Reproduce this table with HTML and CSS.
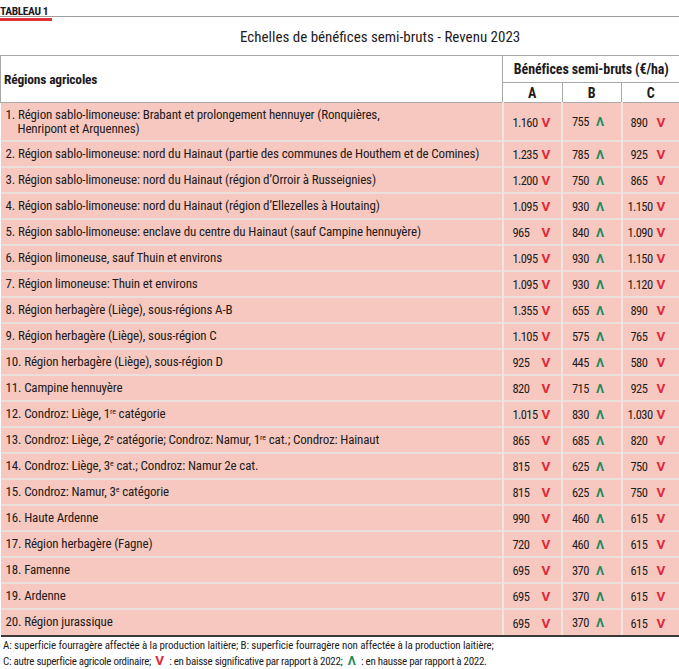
FILE: index.html
```html
<!DOCTYPE html>
<html lang="fr">
<head>
<meta charset="utf-8">
<link rel="stylesheet" href="styles.css">
</head>
<body>
<div class="page">
  <div class="kicker"><span class="kicker-label">TABLEAU 1</span></div>
  <h1 class="title">Echelles de bénéfices semi-bruts - Revenu 2023</h1>
  <table class="grid">
    <colgroup>
      <col class="c-region"><col class="c-a"><col class="c-b"><col class="c-c">
    </colgroup>
    <thead>
      <tr>
        <th class="th-region" rowspan="2">Régions agricoles</th>
        <th class="th-group" colspan="3">Bénéfices semi-bruts (€/ha)</th>
      </tr>
      <tr>
        <th class="th-sub">A</th><th class="th-sub">B</th><th class="th-sub last">C</th>
      </tr>
    </thead>
    <tbody>
      <tr class="tall"><td class="reg">1. Région sablo-limoneuse: Brabant et prolongement hennuyer (Ronquières,<br><span class="indent">Henripont et Arquennes)</span></td><td class="a"><b class="n">1.160</b><i class="dn">V</i></td><td class="b"><b class="n">755</b><i class="up">Λ</i></td><td class="c"><b class="n">890</b><i class="dn">V</i></td></tr>
      <tr><td class="reg">2. Région sablo-limoneuse: nord du Hainaut (partie des communes de Houthem et de Comines)</td><td class="a"><b class="n">1.235</b><i class="dn">V</i></td><td class="b"><b class="n">785</b><i class="up">Λ</i></td><td class="c"><b class="n">925</b><i class="dn">V</i></td></tr>
      <tr><td class="reg">3. Région sablo-limoneuse: nord du Hainaut (région d’Orroir à Russeignies)</td><td class="a"><b class="n">1.200</b><i class="dn">V</i></td><td class="b"><b class="n">750</b><i class="up">Λ</i></td><td class="c"><b class="n">865</b><i class="dn">V</i></td></tr>
      <tr><td class="reg">4. Région sablo-limoneuse: nord du Hainaut (région d’Ellezelles à Houtaing)</td><td class="a"><b class="n">1.095</b><i class="dn">V</i></td><td class="b"><b class="n">930</b><i class="up">Λ</i></td><td class="c"><b class="n w4">1.150</b><i class="dn">V</i></td></tr>
      <tr><td class="reg">5. Région sablo-limoneuse: enclave du centre du Hainaut (sauf Campine hennuyère)</td><td class="a"><b class="n">965</b><i class="dn">V</i></td><td class="b"><b class="n">840</b><i class="up">Λ</i></td><td class="c"><b class="n w4">1.090</b><i class="dn">V</i></td></tr>
      <tr><td class="reg">6. Région limoneuse, sauf Thuin et environs</td><td class="a"><b class="n">1.095</b><i class="dn">V</i></td><td class="b"><b class="n">930</b><i class="up">Λ</i></td><td class="c"><b class="n w4">1.150</b><i class="dn">V</i></td></tr>
      <tr><td class="reg">7. Région limoneuse: Thuin et environs</td><td class="a"><b class="n">1.095</b><i class="dn">V</i></td><td class="b"><b class="n">930</b><i class="up">Λ</i></td><td class="c"><b class="n w4">1.120</b><i class="dn">V</i></td></tr>
      <tr><td class="reg">8. Région herbagère (Liège), sous-régions A-B</td><td class="a"><b class="n">1.355</b><i class="dn">V</i></td><td class="b"><b class="n">655</b><i class="up">Λ</i></td><td class="c"><b class="n">890</b><i class="dn">V</i></td></tr>
      <tr><td class="reg">9. Région herbagère (Liège), sous-région C</td><td class="a"><b class="n">1.105</b><i class="dn">V</i></td><td class="b"><b class="n">575</b><i class="up">Λ</i></td><td class="c"><b class="n">765</b><i class="dn">V</i></td></tr>
      <tr><td class="reg">10. Région herbagère (Liège), sous-région D</td><td class="a"><b class="n">925</b><i class="dn">V</i></td><td class="b"><b class="n">445</b><i class="up">Λ</i></td><td class="c"><b class="n">580</b><i class="dn">V</i></td></tr>
      <tr><td class="reg">11. Campine hennuyère</td><td class="a"><b class="n">820</b><i class="dn">V</i></td><td class="b"><b class="n">715</b><i class="up">Λ</i></td><td class="c"><b class="n">925</b><i class="dn">V</i></td></tr>
      <tr><td class="reg">12. Condroz: Liège, 1<sup>re</sup> catégorie</td><td class="a"><b class="n">1.015</b><i class="dn">V</i></td><td class="b"><b class="n">830</b><i class="up">Λ</i></td><td class="c"><b class="n w4">1.030</b><i class="dn">V</i></td></tr>
      <tr><td class="reg">13. Condroz: Liège, 2<sup>e</sup> catégorie; Condroz: Namur, 1<sup>re</sup> cat.; Condroz: Hainaut</td><td class="a"><b class="n">865</b><i class="dn">V</i></td><td class="b"><b class="n">685</b><i class="up">Λ</i></td><td class="c"><b class="n">820</b><i class="dn">V</i></td></tr>
      <tr><td class="reg">14. Condroz: Liège, 3<sup>e</sup> cat.; Condroz: Namur 2e cat.</td><td class="a"><b class="n">815</b><i class="dn">V</i></td><td class="b"><b class="n">625</b><i class="up">Λ</i></td><td class="c"><b class="n">750</b><i class="dn">V</i></td></tr>
      <tr><td class="reg">15. Condroz: Namur, 3<sup>e</sup> catégorie</td><td class="a"><b class="n">815</b><i class="dn">V</i></td><td class="b"><b class="n">625</b><i class="up">Λ</i></td><td class="c"><b class="n">750</b><i class="dn">V</i></td></tr>
      <tr><td class="reg">16. Haute Ardenne</td><td class="a"><b class="n">990</b><i class="dn">V</i></td><td class="b"><b class="n">460</b><i class="up">Λ</i></td><td class="c"><b class="n">615</b><i class="dn">V</i></td></tr>
      <tr><td class="reg">17. Région herbagère (Fagne)</td><td class="a"><b class="n">720</b><i class="dn">V</i></td><td class="b"><b class="n">460</b><i class="up">Λ</i></td><td class="c"><b class="n">615</b><i class="dn">V</i></td></tr>
      <tr><td class="reg">18. Famenne</td><td class="a"><b class="n">695</b><i class="dn">V</i></td><td class="b"><b class="n">370</b><i class="up">Λ</i></td><td class="c"><b class="n">615</b><i class="dn">V</i></td></tr>
      <tr><td class="reg">19. Ardenne</td><td class="a"><b class="n">695</b><i class="dn">V</i></td><td class="b"><b class="n">370</b><i class="up">Λ</i></td><td class="c"><b class="n">615</b><i class="dn">V</i></td></tr>
      <tr class="last"><td class="reg">20. Région jurassique</td><td class="a"><b class="n">695</b><i class="dn">V</i></td><td class="b"><b class="n">370</b><i class="up">Λ</i></td><td class="c"><b class="n">615</b><i class="dn">V</i></td></tr>
    </tbody>
  </table>
  <div class="notes">
    <p>A: superficie fourragère affectée à la production laitière; B: superficie fourragère non affectée à la production laitière;</p>
    <p class="l2">C: autre superficie agricole ordinaire; <i class="dn">V</i> : en baisse significative par rapport à 2022; <i class="up">Λ</i> : en hausse par rapport à 2022.</p>
  </div>
</div>
</body>
</html>
```

FILE: styles.css
```css
* { box-sizing: border-box; }
html, body { margin: 0; padding: 0; background: #ffffff; }
body {
  font-family: "Roboto Condensed", "Open Sans", sans-serif;
  color: #1e1b1c;
}
.page { width: 679px; }

.kicker {
  height: 17px;
  border-bottom: 1px solid #9c9c9c;
}
.kicker-label {
  display: inline-block;
  width: 52px;
  height: 16px;
  font-size: 11.5px;
  font-weight: bold;
  line-height: 12px;
  letter-spacing: -0.4px;
  white-space: nowrap;
  border-bottom: 3px solid #e0303a;
}

.title {
  margin: 0;
  height: 38px;
  font-size: 15px;
  font-weight: normal;
  line-height: 41px;
  padding-left: 240px;
  white-space: nowrap;
}

.grid {
  width: 679px;
  border-collapse: collapse;
  table-layout: fixed;
  font-size: 13px;
  letter-spacing: -0.15px;
}
.c-region { width: 502px; }
.c-a { width: 59.5px; }
.c-b { width: 59.5px; }
.c-c { width: 58px; }

.grid th {
  font-weight: bold;
  background: #ffffff;
  border: 1px solid #a8a8a8;
  padding: 0;
  font-size: 14px;
  letter-spacing: -0.1px;
}
.grid th.th-region { text-align: left; padding-left: 3px; font-size: 13.5px; letter-spacing: -0.2px; }
.grid th.th-group { height: 27px; border-right: none; }
.grid th.th-sub { height: 20px; }
.grid th.th-sub.last { border-right: none; }

.grid td {
  background: #f6c8bf;
  height: 26px;
  padding: 0;
  border-top: 2px solid #ebdfdc;
  border-left: 2px solid #f2e4e0;
  white-space: nowrap;
  line-height: 14px;
  text-align: left;
}
.grid td.reg { padding-left: 5px; border-left: none; }
.grid td.a, .grid td.b, .grid td.c { padding-left: 9px; padding-top: 2px; }
.grid td.c { padding-left: 8px; }
.grid tr.tall td { height: 38px; border-top: none; }
.grid tr.tall td.reg { padding-top: 1px; }
.grid tr.last td { border-bottom: 2px solid #3a3a3a; height: 27px; }
.indent { padding-left: 12px; }

sup { font-size: 8px; line-height: 0; vertical-align: 4px; }

b.n {
  display: inline-block;
  font-weight: normal;
  font-size: 12.5px;
  letter-spacing: -0.6px;
}
td.a b.n { width: 29px; }
td.b b.n { width: 24px; }
td.c b.n { width: 26px; }
td.c b.n.w4 { margin-left: -3px; width: 29px; }

i.dn, i.up {
  font-style: normal;
  font-weight: bold;
  font-family: Roboto, "Liberation Sans", sans-serif;
  letter-spacing: 0;
}
i.dn { color: #df2a3c; font-size: 13.5px; }
i.up { color: #1f8b5d; font-size: 12.5px; }

.notes {
  padding: 1px 0 0 3px;
  font-size: 11px;
  letter-spacing: -0.12px;
  line-height: 15px;
  white-space: nowrap;
}
.notes p { margin: 0; }
.notes p.l2 { letter-spacing: -0.3px; }
.notes i.dn { margin: 0 3px 0 2px; }
.notes i.up { margin: 0 3px 0 3px; }
```
